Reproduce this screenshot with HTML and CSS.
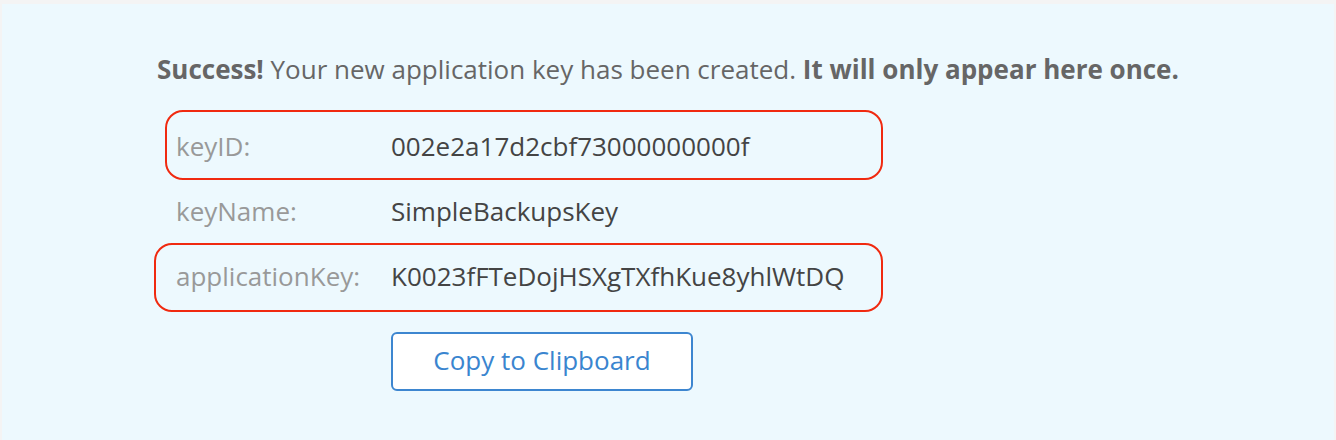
FILE: index.html
```html
<!DOCTYPE html>
<html>
<head>
<meta charset="utf-8">
<link rel="stylesheet" href="styles.css">
</head>
<body>
<div class="panel">
  <p class="headline"><b>Success!</b> Your new application key has been created. <b>It will only appear here once.</b></p>
  <div class="rows">
    <div class="row">
      <span class="mark mark-id"></span>
      <span class="label">keyID:</span>
      <span class="value">002e2a17d2cbf73000000000f</span>
    </div>
    <div class="row">
      <span class="label">keyName:</span>
      <span class="value">SimpleBackupsKey</span>
    </div>
    <div class="row">
      <span class="mark mark-key"></span>
      <span class="label">applicationKey:</span>
      <span class="value">K0023fFTeDojHSXgTXfhKue8yhlWtDQ</span>
    </div>
  </div>
  <button class="copy" type="button">Copy to Clipboard</button>
</div>
</body>
</html>
```

FILE: styles.css
```css
html, body {
  margin: 0;
  padding: 0;
  background: #f4f4f4;
}

body {
  font-family: "Open Sans", "Noto Sans", sans-serif;
  font-size: 26px;
  overflow: hidden;
}

.panel {
  margin: 4px 2px 0 2px;
  height: 436px;
  background: #edf9fe;
  padding: 47px 0 0 155px;
  box-sizing: border-box;
}

.headline {
  margin: 0;
  color: #666666;
  line-height: 36px;
  font-size: 26px;
}

.headline b {
  font-weight: 700;
}

.rows {
  margin-top: 26px;
  margin-left: 19px;
}

.row {
  position: relative;
  display: grid;
  grid-template-columns: 215px 1fr;
  align-items: center;
  height: 65px;
}

.label {
  color: #999999;
}

.value {
  color: #444444;
}

.mark {
  position: absolute;
  border: 2px solid #f02a10;
  border-radius: 18px;
  pointer-events: none;
}

.mark-id {
  left: -11px;
  width: 714px;
  top: -3px;
  bottom: -2px;
}

.mark-key {
  left: -22px;
  width: 725px;
  top: 0;
  bottom: -4px;
}

.copy {
  display: block;
  margin: 24px 0 0 234px;
  width: 302px;
  height: 59px;
  background: #ffffff;
  border: 2px solid #3d86d0;
  border-radius: 6px;
  color: #3a85cf;
  font-family: "Open Sans", "Noto Sans", sans-serif;
  font-size: 26px;
  padding: 0 0 4px 0;
  cursor: pointer;
}
```
